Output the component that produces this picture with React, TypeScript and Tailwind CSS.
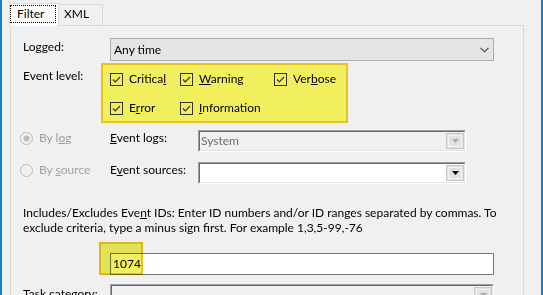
import React from "react";

function Check({ label }: { label: React.ReactNode }) {
  return (
    <div className="flex items-center h-[16px]">
      <svg width="13" height="13" viewBox="0 0 13 13" className="shrink-0">
        <rect x="0.5" y="0.5" width="12" height="12" fill="none" stroke="#333333" strokeWidth="1" />
        <polyline points="3,6.5 5.3,8.8 10,4" fill="none" stroke="#333333" strokeWidth="1.2" />
      </svg>
      <span className="ml-[6px] leading-[16px] text-black whitespace-nowrap">{label}</span>
    </div>
  );
}

function Radio({ checked, label }: { checked: boolean; label: React.ReactNode }) {
  return (
    <div className="flex items-center h-[16px] w-[90px]">
      <svg width="13" height="13" viewBox="0 0 13 13" className="shrink-0">
        <circle cx="6.5" cy="6.5" r="6" fill="#f0f0f0" stroke="#bcbcbc" strokeWidth="1" />
        {checked && <circle cx="6.5" cy="6.5" r="3" fill="#bcbcbc" />}
      </svg>
      <span className="ml-[6px] leading-[16px] text-[#a0a0a0] whitespace-nowrap">{label}</span>
    </div>
  );
}

function ComboButton({ disabled }: { disabled?: boolean }) {
  return (
    <div className="w-[18px] h-[16px] mr-0 border border-[#c8c8c8] bg-[#e1e1e1] flex items-center justify-center shrink-0">
      <div className="w-[14px] h-[12px] border border-[#f4f4f4] flex items-center justify-center">
        <svg width="7" height="4" viewBox="0 0 7 4">
          <polygon points="0,0 7,0 3.5,4" fill={disabled ? "#a8a8a8" : "#000000"} />
        </svg>
      </div>
    </div>
  );
}

function Sunken({
  width,
  height,
  bg,
  children,
}: {
  width: string;
  height: string;
  bg: string;
  children?: React.ReactNode;
}) {
  return (
    <div className={`${width} ${height} border border-[#a0a0a0] border-b-white border-r-white shrink-0`}>
      <div className={`h-full w-full border border-[#696969] border-b-[#e3e3e3] border-r-[#e3e3e3] ${bg} flex items-center justify-between`}>
        {children}
      </div>
    </div>
  );
}

export default function App() {
  return (
    <div className="w-[543px] h-[295px] overflow-hidden bg-[#f0f0f0] flex font-['Lato',sans-serif] text-[12px] text-black">
      <div className="w-[2px] h-full bg-[#1a7ad4] shrink-0" />
      <div className="w-[539px] h-full flex flex-col pl-[7px] pr-[17px]">
        {/* tabs */}
        <div className="flex items-end h-[25px] pt-[3px] shrink-0">
          <div className="relative z-10 w-[50px] h-[23px] -mb-px bg-white border border-b-0 border-[#d9d9d9] pt-px">
            <div className="w-[46px] h-[18px] border border-dotted border-black pl-[6px] leading-[16px]">Filter</div>
          </div>
          <div className="w-[44px] h-[21px] border border-l-0 border-b-0 border-[#d9d9d9] pl-[5px] leading-[18px]">XML</div>
        </div>
        {/* panel */}
        <div className="ml-px flex-1 border border-b-0 border-[#d9d9d9] bg-[#f0f0f0] pl-[12px] pt-[12px]">
          {/* Logged */}
          <div className="flex h-[23px]">
            <div className="w-[87px] pt-px leading-[16px]">Logged:</div>
            <div className="w-[384px] h-[23px] bg-[#e5e5e5] border border-[#adadad] flex items-center justify-between pl-[3px] pr-[4px]">
              <span className="leading-[16px]">Any time</span>
              <svg width="9" height="6" viewBox="0 0 9 6">
                <polyline points="0.5,0.8 4.5,4.8 8.5,0.8" fill="none" stroke="#404040" strokeWidth="1.1" />
              </svg>
            </div>
          </div>
          {/* Event level */}
          <div className="flex mt-[2px]">
            <div className="w-[78px] pt-[5px] leading-[16px]">Event level:</div>
            <div className="w-[247px] h-[60px] border-2 border-[#e6c41e] bg-[#f1ef5e] pl-[7px] pt-[6px]">
              <div className="grid grid-cols-[70px_94px_auto] gap-y-[13px]">
                <Check label={<>Critica<u>l</u></>} />
                <Check label={<><u>W</u>arning</>} />
                <Check label={<>Ver<u>b</u>ose</>} />
                <Check label={<>E<u>r</u>ror</>} />
                <Check label={<><u>I</u>nformation</>} />
              </div>
            </div>
          </div>
          {/* By log */}
          <div className="flex items-start mt-[7px] -ml-[3px]">
            <Radio checked label={<>By l<u>o</u>g</>} />
            <div className="w-[88px] leading-[16px]"><u>E</u>vent logs:</div>
            <Sunken width="w-[268px]" height="h-[22px]" bg="bg-[#f0f0f0]">
              <span className="pl-[1px] leading-[16px] text-[#6d6d6d]">System</span>
              <ComboButton disabled />
            </Sunken>
          </div>
          {/* By source */}
          <div className="flex items-start mt-[10px] -ml-[3px]">
            <Radio checked={false} label={<>By <u>s</u>ource</>} />
            <div className="w-[88px] leading-[16px]">E<u>v</u>ent sources:</div>
            <Sunken width="w-[268px]" height="h-[22px]" bg="bg-white">
              <span />
              <ComboButton />
            </Sunken>
          </div>
          {/* paragraph */}
          <div className="mt-[21px] leading-[15px] whitespace-nowrap">
            Includes/Excludes Eve<u>n</u>t IDs: Enter ID numbers and/or ID ranges separated by commas. To
            <br />
            exclude criteria, type a minus sign first. For example 1,3,5-99,-76
          </div>
          {/* ids input */}
          <div className="mt-[18px] ml-[87px] relative w-[384px] h-[22px] bg-white border border-[#7a7a7a] flex items-center pl-[2px]">
            <span className="leading-[16px]">1074</span>
            <div className="absolute -left-[12px] -top-[12px] w-[44px] h-[33px] border-2 border-[#e6c41e] bg-[#f1ef5e] mix-blend-multiply" />
          </div>
          {/* task category */}
          <div className="flex mt-[9px]">
            <div className="w-[87px] pt-[2px] leading-[16px] whitespace-nowrap">Task category:</div>
            <Sunken width="w-[384px]" height="h-[22px]" bg="bg-[#f0f0f0]">
              <span />
              <ComboButton disabled />
            </Sunken>
          </div>
        </div>
      </div>
      <div className="w-[2px] h-full bg-[#1a7ad4] shrink-0" />
    </div>
  );
}
